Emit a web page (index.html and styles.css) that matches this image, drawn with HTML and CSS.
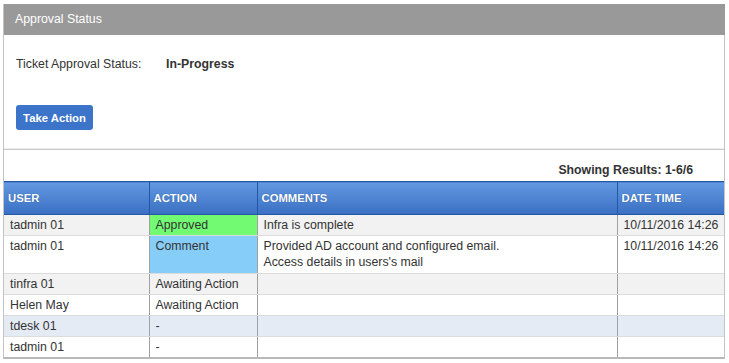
FILE: index.html
```html
<!DOCTYPE html>
<html lang="en">
<head>
    <meta charset="UTF-8">
    <title>Approval Status</title>
    <link rel="stylesheet" href="styles.css">
</head>
<body>
    <div class="panel">
        <div class="panel-title">Approval Status</div>

        <div class="panel-body">
            <div class="status-row">
                <span class="status-label">Ticket Approval Status:</span>
                <span class="status-value">In-Progress</span>
            </div>
            <button class="action-button">Take Action</button>
        </div>

        <div class="divider"></div>

        <div class="results">Showing Results: 1-6/6</div>

        <table class="approvals">
            <thead>
                <tr>
                    <th class="col-user">User</th>
                    <th class="col-action">Action</th>
                    <th class="col-comments">Comments</th>
                    <th class="col-date">Date Time</th>
                </tr>
            </thead>
            <tbody>
                <tr class="row-gray">
                    <td>tadmin 01</td>
                    <td class="approved">Approved</td>
                    <td>Infra is complete</td>
                    <td>10/11/2016 14:26</td>
                </tr>
                <tr class="row-tall">
                    <td>tadmin 01</td>
                    <td class="comment">Comment</td>
                    <td>Provided AD account and configured email.<br>Access details in users's mail</td>
                    <td>10/11/2016 14:26</td>
                </tr>
                <tr class="row-gray">
                    <td>tinfra 01</td>
                    <td>Awaiting Action</td>
                    <td></td>
                    <td></td>
                </tr>
                <tr>
                    <td>Helen May</td>
                    <td>Awaiting Action</td>
                    <td></td>
                    <td></td>
                </tr>
                <tr class="row-blue">
                    <td>tdesk 01</td>
                    <td>-</td>
                    <td></td>
                    <td></td>
                </tr>
                <tr>
                    <td>tadmin 01</td>
                    <td>-</td>
                    <td></td>
                    <td></td>
                </tr>
            </tbody>
        </table>
    </div>
</body>
</html>
```

FILE: styles.css
```css
* {
    margin: 0;
    padding: 0;
    box-sizing: border-box;
}

body {
    font-family: "Liberation Sans", Arial, sans-serif;
    font-size: 12.3px;
    color: #333;
    background: #fff;
    padding: 4px 4px 0 3px;
}

/* Panel */
.panel {
    border: 1px solid #c4c4c4;
    border-bottom: none;
}

.panel-title {
    background: #999;
    color: #fff;
    height: 31px;
    line-height: 30px;
    padding-left: 11px;
    margin: -1px -1px 0 0;
}

.panel-body {
    padding: 22px 12px 18px;
}

.status-row {
    display: flex;
    line-height: 14px;
}

.status-label {
    width: 150px;
}

.status-value {
    font-weight: bold;
}

.action-button {
    margin-top: 34px;
    width: 77px;
    height: 25px;
    background: #3b74c9;
    color: #fff;
    font-family: inherit;
    font-size: 11.3px;
    font-weight: bold;
    border: none;
    border-radius: 3px;
}

.divider {
    height: 2px;
    border-top: 1px solid #ececec;
    border-bottom: 1px solid #c8c8c8;
}

.results {
    text-align: right;
    font-weight: bold;
    padding: 13px 31px 0 0;
    height: 31px;
    line-height: 14px;
}

/* Table */
.approvals {
    width: 100%;
    border-collapse: collapse;
    table-layout: fixed;
    border-bottom: 2px solid #b8b8b8;
}

.approvals th {
    background: linear-gradient(to bottom, #6299e0, #3a6fc3);
    color: #fff;
    font-size: 11.3px;
    font-weight: bold;
    text-transform: uppercase;
    text-align: left;
    height: 33px;
    padding: 0 4px;
    border: 1px solid #2556a6;
    border-left: none;
    text-shadow: 0 0 1px #1d4a8e;
}

.approvals th:last-child {
    border-right: none;
}

.col-user { width: 145px; }
.col-action { width: 108px; }
.col-comments { width: 360px; }

.approvals td {
    vertical-align: top;
    line-height: 16px;
    padding: 2px 6px;
    border-right: 1px solid #a0a0a0;
    border-bottom: 1px solid #dcdcdc;
    white-space: nowrap;
}

.approvals td:last-child {
    border-right: none;
}

.approvals .row-tall td {
    padding-bottom: 3px;
}

.row-gray td { background: #f2f2f2; }
.row-blue td { background: #e4ebf5; }

.approvals td.approved { background: #72fb72; }
.approvals td.comment { background: #87cdf9; }
```
